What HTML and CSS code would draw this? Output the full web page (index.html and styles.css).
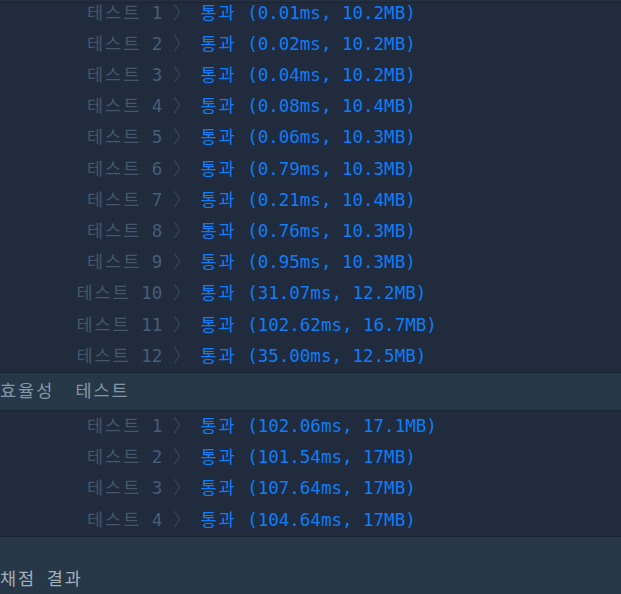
FILE: index.html
```html
<!DOCTYPE html>
<html lang="ko">
<head>
<meta charset="utf-8">
<title>채점 결과</title>
<link rel="stylesheet" href="styles.css">
</head>
<body>
<div class="edge"></div>
<div class="console">
  <div class="group">
    <div class="row"><span class="label"><span class="ko">테스트</span> <span class="num">1</span> <span class="chev">〉</span></span><span class="result"><span class="ko">통과</span> (0.01ms, 10.2MB)</span></div>
    <div class="row"><span class="label"><span class="ko">테스트</span> <span class="num">2</span> <span class="chev">〉</span></span><span class="result"><span class="ko">통과</span> (0.02ms, 10.2MB)</span></div>
    <div class="row"><span class="label"><span class="ko">테스트</span> <span class="num">3</span> <span class="chev">〉</span></span><span class="result"><span class="ko">통과</span> (0.04ms, 10.2MB)</span></div>
    <div class="row"><span class="label"><span class="ko">테스트</span> <span class="num">4</span> <span class="chev">〉</span></span><span class="result"><span class="ko">통과</span> (0.08ms, 10.4MB)</span></div>
    <div class="row"><span class="label"><span class="ko">테스트</span> <span class="num">5</span> <span class="chev">〉</span></span><span class="result"><span class="ko">통과</span> (0.06ms, 10.3MB)</span></div>
    <div class="row"><span class="label"><span class="ko">테스트</span> <span class="num">6</span> <span class="chev">〉</span></span><span class="result"><span class="ko">통과</span> (0.79ms, 10.3MB)</span></div>
    <div class="row"><span class="label"><span class="ko">테스트</span> <span class="num">7</span> <span class="chev">〉</span></span><span class="result"><span class="ko">통과</span> (0.21ms, 10.4MB)</span></div>
    <div class="row"><span class="label"><span class="ko">테스트</span> <span class="num">8</span> <span class="chev">〉</span></span><span class="result"><span class="ko">통과</span> (0.76ms, 10.3MB)</span></div>
    <div class="row"><span class="label"><span class="ko">테스트</span> <span class="num">9</span> <span class="chev">〉</span></span><span class="result"><span class="ko">통과</span> (0.95ms, 10.3MB)</span></div>
    <div class="row"><span class="label"><span class="ko">테스트</span> <span class="num">10</span> <span class="chev">〉</span></span><span class="result"><span class="ko">통과</span> (31.07ms, 12.2MB)</span></div>
    <div class="row"><span class="label"><span class="ko">테스트</span> <span class="num">11</span> <span class="chev">〉</span></span><span class="result"><span class="ko">통과</span> (102.62ms, 16.7MB)</span></div>
    <div class="row"><span class="label"><span class="ko">테스트</span> <span class="num">12</span> <span class="chev">〉</span></span><span class="result"><span class="ko">통과</span> (35.00ms, 12.5MB)</span></div>
  </div>
  <div class="section-head"><span class="ko">효율성</span>  <span class="ko">테스트</span></div>
  <div class="group">
    <div class="row"><span class="label"><span class="ko">테스트</span> <span class="num">1</span> <span class="chev">〉</span></span><span class="result"><span class="ko">통과</span> (102.06ms, 17.1MB)</span></div>
    <div class="row"><span class="label"><span class="ko">테스트</span> <span class="num">2</span> <span class="chev">〉</span></span><span class="result"><span class="ko">통과</span> (101.54ms, 17MB)</span></div>
    <div class="row"><span class="label"><span class="ko">테스트</span> <span class="num">3</span> <span class="chev">〉</span></span><span class="result"><span class="ko">통과</span> (107.64ms, 17MB)</span></div>
    <div class="row"><span class="label"><span class="ko">테스트</span> <span class="num">4</span> <span class="chev">〉</span></span><span class="result"><span class="ko">통과</span> (104.64ms, 17MB)</span></div>
  </div>
  <div class="summary"><span class="ko">채점</span> <span class="ko">결과</span></div>
</div>
</body>
</html>
```

FILE: styles.css
```css
html, body {
  margin: 0;
  padding: 0;
}

body {
  background: #202b3d;
  font-family: "DejaVu Sans Mono", "Noto Sans CJK KR", monospace;
  font-size: 17.5px;
  overflow: hidden;
}

.edge {
  position: absolute;
  left: 0;
  right: 0;
  top: 0;
  height: 2px;
  background: #232f41;
  border-bottom: 1px solid #1a2332;
  z-index: 2;
}

.console {
  margin-top: -2.3px;
}

.ko {
  letter-spacing: 2px;
}

.row {
  display: flex;
  height: 31.2px;
  line-height: 31.2px;
  white-space: pre;
}

.label {
  width: 190.4px;
  flex: none;
  text-align: right;
  color: #44576c;
}

.num {
  color: #485d77;
}

.chev {
  color: #34445a;
}

.result {
  margin-left: 10px;
  color: #0e7df8;
}

.section-head {
  border-top: 1px solid #1b2433;
  border-bottom: 1px solid #1b2433;
  background: #263747;
  height: 37px;
  line-height: 37px;
  white-space: pre;
  color: #8197a9;
}

.summary {
  border-top: 1px solid #1b2433;
  background: #263747;
  padding-top: 31px;
  height: 26px;
  line-height: 22px;
  color: #a3afba;
}
```
